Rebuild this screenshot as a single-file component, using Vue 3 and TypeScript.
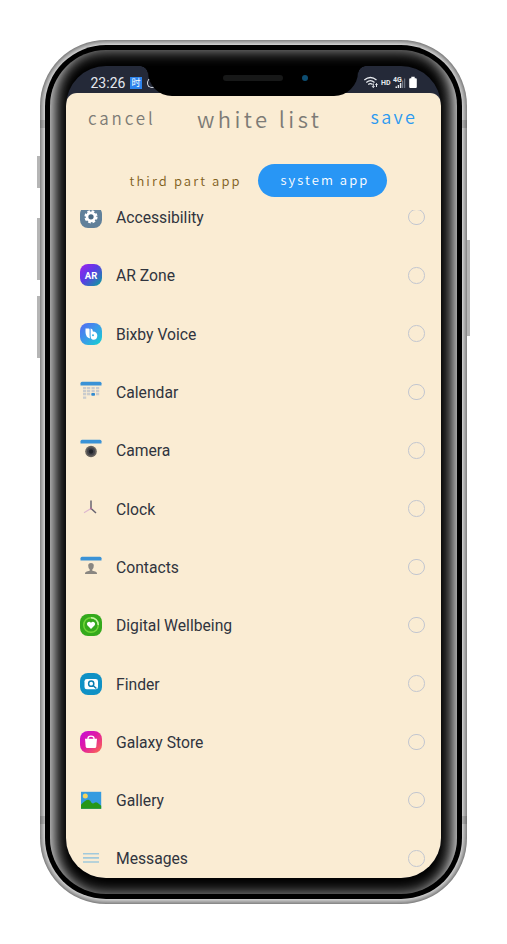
<script setup lang="ts">
interface AppEntry {
  id: string
  label: string
}

const apps: AppEntry[] = [
  { id: 'accessibility', label: 'Accessibility' },
  { id: 'ar', label: 'AR Zone' },
  { id: 'bixby', label: 'Bixby Voice' },
  { id: 'calendar', label: 'Calendar' },
  { id: 'camera', label: 'Camera' },
  { id: 'clock', label: 'Clock' },
  { id: 'contacts', label: 'Contacts' },
  { id: 'wellbeing', label: 'Digital Wellbeing' },
  { id: 'finder', label: 'Finder' },
  { id: 'store', label: 'Galaxy Store' },
  { id: 'gallery', label: 'Gallery' },
  { id: 'messages', label: 'Messages' },
]

// Day cells of the calendar icon: x, y
const days: number[][] = [
  [3, 6], [7, 6], [11.5, 6], [16, 6],
  [3, 9], [7, 9], [11.5, 9], [16, 9],
  [3, 12], [7, 12], [16, 12],
  [3, 15.5],
]
</script>

<template>
  <div class="stage">
    <div class="phone">
      <i class="key mute"></i>
      <i class="key up"></i>
      <i class="key down"></i>
      <i class="key power"></i>
      <i class="band band-top"></i>
      <i class="band band-bottom"></i>
      <div class="black"></div>
      <div class="inner-shadow"></div>

      <div class="screen">
        <div class="status">
          <span class="time">23:26</span>
          <span class="badge">时</span>
          <span class="moon"></span>
          <svg class="signals" viewBox="0 0 56 16" width="56" height="16">
            <g fill="none" stroke="#e6e9ee" stroke-width="1.3">
              <path d="M1.300 5Q7.500 0 13.500 5M3.300 7.400Q7.500 4 11.500 7.400M5.200 9.600Q7.500 7.800 9.500 9.600" />
              <path d="M10.300 8.500v4M9.100 11.200l1.200 1.300 1.200-1.300M13.500 12V8.500M12.400 9.700l1.100-1.200 1.100 1.200" stroke-width="1" />
            </g>
            <text x="18" y="9.800" class="hd">HD</text>
            <text x="30" y="7" class="g4">4G</text>
            <path d="M32.500 11.500h1.500V13h-1.500zM34.700 10h1.400v3h-1.400zM36.900 8.100h1.400V13h-1.400z" fill="#e6e9ee" />
            <path d="M39 5.500h1.200V13H39zM41.100 3.500h1.100V13h-1.100z" fill="#747b87" />
            <path d="M48.300 1.800h3.400v1.500h1.100q1 0 1 1v7.700q0 1-1 1h-5.600q-1 0-1-1V4.300q0-1 1-1h1.100z" fill="#fff" />
          </svg>
        </div>

        <div class="sheet">
          <header class="head">
            <span class="cancel">cancel</span>
            <span class="title">white list</span>
            <span class="save">save</span>
          </header>
          <nav class="tabs">
            <span class="tab">third part app</span>
            <span class="tab active">system app</span>
          </nav>
          <div class="list">
            <ul>
              <li v-for="app in apps" :key="app.id">
                <svg class="icon" viewBox="0 0 22 22" width="22" height="22">
                  <defs>
                    <linearGradient id="g-ar" x1="0" y1="0" x2="1" y2="1">
                      <stop offset="0" stop-color="#a020ee" />
                      <stop offset=".45" stop-color="#5b3be6" />
                      <stop offset="1" stop-color="#06a597" />
                    </linearGradient>
                    <linearGradient id="g-bixby" x1="0" y1="0" x2="1" y2="1">
                      <stop offset="0" stop-color="#5668f3" />
                      <stop offset=".5" stop-color="#3b9be8" />
                      <stop offset="1" stop-color="#10d5d0" />
                    </linearGradient>
                    <linearGradient id="g-store" x1="0" y1="0" x2="1" y2="1">
                      <stop offset="0" stop-color="#c40ed8" />
                      <stop offset=".45" stop-color="#df18a6" />
                      <stop offset="1" stop-color="#ff7048" />
                    </linearGradient>
                  </defs>
                  <g v-if="app.id === 'accessibility'">
                    <rect width="22" height="22" rx="8" fill="#60809a" />
                    <circle cx="11" cy="10.800" r="5.600" fill="none" stroke="#fff" stroke-width="2" stroke-dasharray="2.600 1.798" />
                    <circle cx="11" cy="10.800" r="4" fill="#4c6b84" stroke="#fff" stroke-width="2.700" />
                  </g>
                  <g v-else-if="app.id === 'ar'">
                    <rect width="22" height="22" rx="8" fill="url(#g-ar)" />
                    <text x="11" y="14.600" class="ar">AR</text>
                  </g>
                  <g v-else-if="app.id === 'bixby'">
                    <rect width="22" height="22" rx="8" fill="url(#g-bixby)" />
                    <path d="M5.500 5.500h3.200q.9 0 .9 1v6.200q0 1.500.7 2.800Q5.500 14.500 5.500 9z" fill="#fff" />
                    <path d="M10.600 5.500q2.200.2 2.200 2.600v.3q4.500.3 4.500 4.100 0 4.200-3.900 4.200-2.800 0-2.800-3.700z" fill="#fff" />
                    <circle cx="13" cy="12.200" r="1" fill="#36b5e0" />
                  </g>
                  <g v-else-if="app.id === 'calendar'">
                    <path d="M.5 4.500V2.300Q.5.800 2 .800h18q1.500 0 1.500 1.500v2.200z" fill="#3a92d6" />
                    <rect v-for="(d, i) in days" :key="i" :x="d[0]" :y="d[1]" width="3.200" height="2.300" fill="#c9cbcd" />
                    <rect x="11.300" y="12" width="3.700" height="2.800" rx=".8" fill="#328bd0" />
                  </g>
                  <g v-else-if="app.id === 'camera'">
                    <path d="M.5 4.500V2.300Q.5.800 2 .800h18q1.500 0 1.500 1.500v2.200z" fill="#3a92d6" />
                    <circle cx="11" cy="12.500" r="5.800" fill="#66625d" />
                    <circle cx="11" cy="12.500" r="4" fill="#43434a" />
                    <circle cx="11" cy="12.500" r="2.200" fill="#202329" />
                  </g>
                  <g v-else-if="app.id === 'clock'" fill="none">
                    <path d="M11 10.500l-7 4.300" stroke="#ddb8cf" stroke-width="1.200" />
                    <path d="M11 2.500v8l5 4.500" stroke="#686471" stroke-width="1.500" />
                    <circle cx="11" cy="10.500" r="1" fill="#b16f9c" />
                  </g>
                  <g v-else-if="app.id === 'contacts'">
                    <path d="M.5 4.500V2.300Q.5.800 2 .800h18q1.500 0 1.500 1.500v2.200z" fill="#3a92d6" />
                    <path d="M8.200 9.500q0-2.500 2.800-2.500t2.800 2.500q0 3-1.500 4v1.300q4.700.6 4.700 2.700v.5H5v-.5q0-2.100 4.700-2.700v-1.300q-1.500-1-1.500-4z" fill="#898681" />
                  </g>
                  <g v-else-if="app.id === 'wellbeing'">
                    <rect width="22" height="22" rx="8" fill="#34a91c" />
                    <circle cx="11" cy="11" r="7.300" fill="none" stroke="#71d637" stroke-width="1.500" />
                    <path d="M11 3.700a7.300 7.300 0 0 1 7.300 7.300" fill="none" stroke="#c5f0a6" stroke-width="1.500" />
                    <path d="M11 15L7.300 11.200q-1-1.500.2-2.800 1.900-1.300 3.500.4 1.600-1.700 3.500-.4 1.200 1.300.2 2.800z" fill="#fff" />
                  </g>
                  <g v-else-if="app.id === 'finder'">
                    <rect width="22" height="22" rx="8" fill="#0f91c5" />
                    <rect x="4.500" y="6" width="13.500" height="10.200" rx="2.300" fill="#fff" />
                    <circle cx="11.200" cy="10.700" r="2.600" fill="none" stroke="#087baf" stroke-width="1.500" />
                    <path d="M13 12.500l3.400 3" stroke="#087baf" stroke-width="1.500" />
                  </g>
                  <g v-else-if="app.id === 'store'">
                    <rect width="22" height="22" rx="8" fill="url(#g-store)" />
                    <path d="M5 7.700h12l-.7 7.800q-.2 1.500-1.500 1.500H7.200q-1.300 0-1.500-1.500z" fill="#fff" />
                    <path d="M8 8.500V7.300q0-2.200 3-2.200t3 2.200v1.200" fill="none" stroke="#fff" stroke-width="1.300" />
                  </g>
                  <g v-else-if="app.id === 'gallery'">
                    <rect x="1" y="2.800" width="20.200" height="17" fill="#349be0" />
                    <path d="M1 15.800Q6 10.300 8.500 10.800q2 .5 3 3 1.500 1.500 3 0 1.500-1.300 3 0l3.700 3v3H1z" fill="#269718" />
                    <circle cx="5.300" cy="7.100" r="2.500" fill="#f4d35e" />
                  </g>
                  <path v-else d="M3 6.800h16M3 10.900h16M3 15h16" stroke="#a1c9dc" stroke-width="1.600" />
                </svg>
                <span class="name">{{ app.label }}</span>
                <span class="radio"></span>
              </li>
            </ul>
          </div>
        </div>
      </div>

      <div class="notch"><i class="speaker"></i><i class="lens"></i></div>
    </div>
  </div>
</template>

<style>
body {
  background: #fff;
}
</style>

<style scoped>
.stage {
  box-sizing: border-box;
  width: 507px;
  height: 944px;
  padding: 40px;
  overflow: hidden;
}
.phone {
  position: relative;
  box-sizing: border-box;
  width: 427px;
  height: 864px;
  padding: 26px;
  border-radius: 66px;
  background: #fdfdfd;
  box-shadow: inset 0 0 11px 0 #000;
}
.key {
  position: absolute;
  width: 3px;
  left: -3px;
  background: #b5b5b5;
}
.mute { top: 116px; height: 32px; }
.up { top: 178px; height: 62px; }
.down { top: 256px; height: 62px; }
.power { left: auto; right: -3px; top: 200px; height: 96px; }
.band {
  position: absolute;
  left: 0;
  width: 100%;
  height: 8px;
  background: rgba(0, 0, 0, 0.13);
}
.band-top { top: 80px; }
.band-bottom { bottom: 80px; }
.black {
  position: absolute;
  inset: 5px;
  border-radius: 61px;
  background: #000;
}
.inner-shadow {
  position: absolute;
  inset: 10px;
  border-radius: 56px;
  overflow: hidden;
  box-shadow: inset 0 0 15px 0 rgba(255, 255, 255, 0.66);
}
.inner-shadow::before {
  content: '';
  position: absolute;
  top: -8%;
  left: 0;
  width: 100%;
  height: 116%;
  border-radius: 200px / 112px;
  box-shadow: inset 0 0 20px 0 #fff;
}
.screen {
  position: relative;
  display: flex;
  flex-direction: column;
  width: 375px;
  height: 812px;
  border-radius: 40px;
  overflow: hidden;
  background: #242938;
}
.status {
  display: flex;
  align-items: center;
  box-sizing: border-box;
  height: 27px;
  padding: 7px 22px 0 24.5px;
}
.time {
  width: 39.5px;
  font: 14px/16px Roboto, sans-serif;
  color: #e3e7ee;
}
.badge {
  width: 12px;
  height: 12px;
  font: 9px/11px "Noto Sans CJK SC", sans-serif;
  text-align: center;
  color: #fff;
  background: #2d83ec;
}
.moon {
  box-sizing: border-box;
  width: 10px;
  height: 10px;
  margin-left: 4.5px;
  border: 1.5px solid #dde1e8;
  border-right-color: transparent;
  border-radius: 50%;
}
.signals {
  margin-left: auto;
}
.hd, .g4 {
  font: 700 7px Roboto, sans-serif;
  fill: #e6e9ee;
}
.sheet {
  flex: 1;
  display: flex;
  flex-direction: column;
  border-radius: 11px 11px 0 0;
  overflow: hidden;
  background: #faecd3;
  font-family: "Noto Sans CJK SC", sans-serif;
}
.head {
  display: flex;
  align-items: flex-start;
  height: 71px;
  padding-left: 22px;
  font-weight: 350;
  color: #7d7b76;
  white-space: nowrap;
}
.cancel {
  width: 109px;
  margin-top: 13px;
  font-size: 17px;
  line-height: 24px;
  letter-spacing: 2.85px;
}
.title {
  width: 173.5px;
  margin-top: 9px;
  font-size: 22px;
  line-height: 32px;
  letter-spacing: 3.4px;
}
.save {
  margin-top: 11px;
  font-size: 18px;
  line-height: 24px;
  letter-spacing: 2.3px;
  color: #2c9af0;
}
.tabs {
  display: flex;
  height: 45.5px;
  padding-left: 63.5px;
  font-weight: 350;
}
.tab {
  width: 128.5px;
  height: 33px;
  font-size: 13px;
  line-height: 33px;
  letter-spacing: 2.1px;
  color: #80601c;
  white-space: nowrap;
}
.tab.active {
  box-sizing: border-box;
  padding-left: 22.5px;
  line-height: 32px;
  letter-spacing: 2.05px;
  border-radius: 17px;
  color: #fff;
  background: #2896f5;
}
.list {
  flex: 1;
  overflow: hidden;
}
ul {
  margin: -21px 0 0;
  padding: 0;
  list-style: none;
}
li {
  display: flex;
  align-items: center;
  height: 58.3px;
  padding: 0 16.5px 0 14px;
}
.icon {
  flex: none;
  margin-top: -1px;
}
.name {
  flex: 1;
  margin: 0 0 0 14px;
  font: 15.7px/15px Roboto, sans-serif;
  color: #30343e;
}
.radio {
  box-sizing: border-box;
  width: 16.5px;
  height: 16.5px;
  margin-top: -1px;
  border: 1.5px solid #c2c6d0;
  border-radius: 50%;
}
.ar {
  font: 700 9.5px Roboto, sans-serif;
  text-anchor: middle;
  fill: #fff;
}
.notch {
  position: absolute;
  top: 26px;
  left: 108px;
  width: 210px;
  height: 30px;
  border-radius: 0 0 24px 24px;
  background: #000;
}
.notch::before,
.notch::after {
  content: '';
  position: absolute;
  top: 0;
  width: 8px;
  height: 8px;
}
.notch::before {
  left: -8px;
  background: radial-gradient(circle at 0 100%, transparent 7.5px, #000 8px);
}
.notch::after {
  right: -8px;
  background: radial-gradient(circle at 100% 100%, transparent 7.5px, #000 8px);
}
.speaker {
  position: absolute;
  left: 75px;
  top: 9px;
  width: 60px;
  height: 6px;
  border-radius: 6px;
  background: #171818;
}
.lens {
  position: absolute;
  left: 154px;
  top: 9px;
  width: 6px;
  height: 6px;
  border-radius: 50%;
  background: #0d4d71;
}
</style>
